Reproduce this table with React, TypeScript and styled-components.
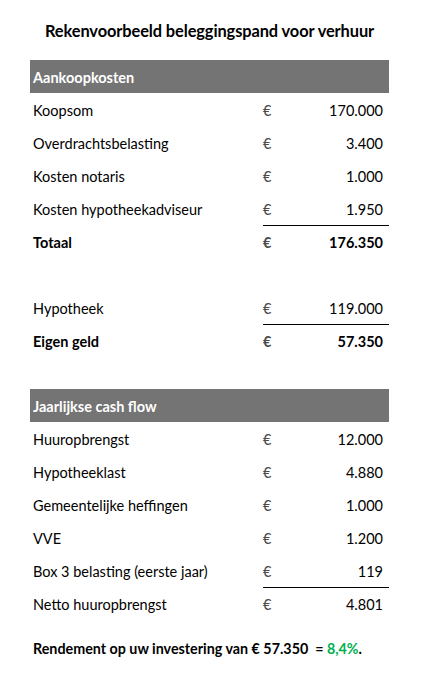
import React from "react";
import styled, { createGlobalStyle } from "styled-components";

const Global = createGlobalStyle`
  html, body { margin: 0; padding: 0; background: #ffffff; }
  body { font-family: Lato, "Open Sans", "Liberation Sans", sans-serif; color: #000; }
`;

const Page = styled.div`
  width: 433px;
  height: 679px;
  padding: 0 0 0 30px;
  box-sizing: border-box;
`;

const Sheet = styled.div`
  width: 359px;
  display: flex;
  flex-direction: column;
`;

const Title = styled.h1`
  margin: 0;
  height: 60px;
  display: flex;
  align-items: center;
  justify-content: center;
  font-size: 16.4px;
  font-weight: 700;
  letter-spacing: -0.1px;
`;

const Header = styled.div`
  height: 33px;
  background: #747474;
  color: #ffffff;
  font-weight: 700;
  font-size: 14.5px;
  display: flex;
  align-items: center;
  padding: 2px 0 0 3px;
  box-sizing: border-box;
`;

const Row = styled.div<{ $bold?: boolean }>`
  height: 33px;
  box-sizing: border-box;
  display: grid;
  grid-template-columns: 230px 20px 1fr;
  align-items: center;
  padding: 2px 6px 0 3px;
  font-size: 14.5px;
  font-weight: ${(p) => (p.$bold ? 700 : 400)};
`;

const LinedRow = styled(Row)`
  position: relative;
  &::before {
    content: "";
    position: absolute;
    top: 0;
    left: 233px;
    right: 0;
    height: 1px;
    background: #000;
  }
`;

const Label = styled.span``;

const Euro = styled.span`
  color: #4a4a4a;
`;

const Amount = styled.span`
  text-align: right;
`;

const Spacer = styled.div<{ $h: number }>`
  height: ${(p) => p.$h}px;
`;

const Result = styled.p`
  margin: 0;
  padding: 20px 0 0 3px;
  font-size: 14.3px;
  font-weight: 700;
  white-space: pre;
`;

const Green = styled.span`
  color: #00b050;
`;

type Item = { label: string; value: string; bold?: boolean; line?: boolean };

const RowItem = ({ label, value, bold, line }: Item) => {
  const R = line ? LinedRow : Row;
  return (
    <R $bold={bold}>
      <Label>{label}</Label>
      <Euro>€</Euro>
      <Amount>{value}</Amount>
    </R>
  );
};

const aankoop: Item[] = [
  { label: "Koopsom", value: "170.000" },
  { label: "Overdrachtsbelasting", value: "3.400" },
  { label: "Kosten notaris", value: "1.000" },
  { label: "Kosten hypotheekadviseur", value: "1.950" },
  { label: "Totaal", value: "176.350", bold: true, line: true },
];

const financiering: Item[] = [
  { label: "Hypotheek", value: "119.000" },
  { label: "Eigen geld", value: "57.350", bold: true, line: true },
];

const cashflow: Item[] = [
  { label: "Huuropbrengst", value: "12.000" },
  { label: "Hypotheeklast", value: "4.880" },
  { label: "Gemeentelijke heffingen", value: "1.000" },
  { label: "VVE", value: "1.200" },
  { label: "Box 3 belasting (eerste jaar)", value: "119" },
  { label: "Netto huuropbrengst", value: "4.801", line: true },
];

export default function App() {
  return (
    <>
      <Global />
      <Page>
        <Sheet>
          <Title>Rekenvoorbeeld beleggingspand voor verhuur</Title>
          <Header>Aankoopkosten</Header>
          {aankoop.map((i) => (
            <RowItem key={i.label} {...i} />
          ))}
          <Spacer $h={33} />
          {financiering.map((i) => (
            <RowItem key={i.label} {...i} />
          ))}
          <Spacer $h={32} />
          <Header>Jaarlijkse cash flow</Header>
          {cashflow.map((i) => (
            <RowItem key={i.label} {...i} />
          ))}
          <Result>
            Rendement op uw investering van € 57.350  = <Green>8,4%</Green>.
          </Result>
        </Sheet>
      </Page>
    </>
  );
}
